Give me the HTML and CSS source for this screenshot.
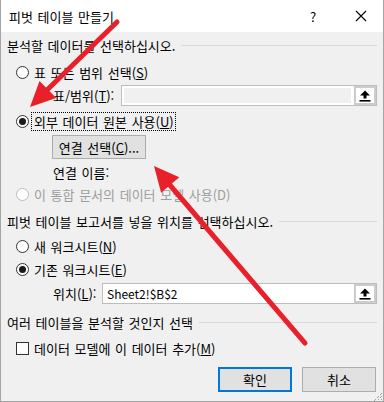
FILE: index.html
```html
<!DOCTYPE html>
<html lang="ko">
<head>
    <meta charset="UTF-8">
    <meta name="viewport" content="width=device-width, initial-scale=1.0">
    <title>피벗 테이블 만들기</title>
    <link rel="stylesheet" href="styles.css">
</head>
<body>
    <div class="dialog">
        <div class="titlebar">
            <span class="title">피벗 테이블 만들기</span>
            <span class="help">?</span>
            <svg class="close" width="12" height="12" viewBox="0 0 12 12">
                <path d="M1 1 L11 11 M11 1 L1 11" stroke="#000" stroke-width="1.1" fill="none"/>
            </svg>
        </div>
        <div class="content">
            <div class="group-title row-h1"><span>분석할 데이터를 선택하십시오.</span></div>
            <div class="radio row-src1"><span class="circle"></span><span>표 또는 범위 선택(<u>S</u>)</span></div>
            <div class="field-row row-range">
                <span class="field-label label-range">표/범위(<u>T</u>):</span>
                <div class="refedit disabled">
                    <div class="refedit-input"></div>
                    <div class="refedit-btn">
                        <svg width="12" height="12" viewBox="0 0 12 12">
                            <path d="M6 0.5 L11 5.5 L7.5 5.5 L7.5 8.5 L4.5 8.5 L4.5 5.5 L1 5.5 Z" fill="#000"/>
                            <rect x="0.5" y="10" width="11" height="1.6" fill="#000"/>
                        </svg>
                    </div>
                </div>
            </div>
            <div class="radio row-src2"><span class="circle checked"></span><span class="focus">외부 데이터 원본 사용(<u>U</u>)</span></div>
            <div class="row-conn"><button class="btn btn-conn">연결 선택(<u>C</u>)...</button></div>
            <div class="conn-name row-name">연결 이름:</div>
            <div class="radio disabled-radio row-model"><span class="circle"></span><span>이 통합 문서의 데이터 모델 사용(D)</span></div>

            <div class="group-title row-h2"><span>피벗 테이블 보고서를 넣을 위치를 선택하십시오.</span></div>
            <div class="radio row-new"><span class="circle"></span><span>새 워크시트(<u>N</u>)</span></div>
            <div class="radio row-exist"><span class="circle checked"></span><span>기존 워크시트(<u>E</u>)</span></div>
            <div class="field-row row-loc">
                <span class="field-label label-loc">위치(<u>L</u>):</span>
                <div class="refedit">
                    <div class="refedit-input">Sheet2!$B$2</div>
                    <div class="refedit-btn">
                        <svg width="12" height="12" viewBox="0 0 12 12">
                            <path d="M6 0.5 L11 5.5 L7.5 5.5 L7.5 8.5 L4.5 8.5 L4.5 5.5 L1 5.5 Z" fill="#000"/>
                            <rect x="0.5" y="10" width="11" height="1.6" fill="#000"/>
                        </svg>
                    </div>
                </div>
            </div>

            <div class="group-title row-h3"><span>여러 테이블을 분석할 것인지 선택</span></div>
            <div class="check row-check"><span class="box"></span><span>데이터 모델에 이 데이터 추가(<u>M</u>)</span></div>

            <div class="actions">
                <button class="btn btn-ok">확인</button>
                <button class="btn btn-cancel">취소</button>
            </div>
        </div>
        <svg class="grip" width="10" height="10" viewBox="0 0 10 10">
            <g fill="#a0a0a0">
                <rect x="8" y="2" width="1" height="1"/><rect x="7" y="3" width="1" height="1"/>
                <rect x="8" y="5" width="1" height="1"/><rect x="7" y="6" width="1" height="1"/>
                <rect x="5" y="5" width="1" height="1"/><rect x="4" y="6" width="1" height="1"/>
                <rect x="8" y="8" width="1" height="1"/><rect x="5" y="8" width="1" height="1"/>
                <rect x="2" y="8" width="1" height="1"/><rect x="1" y="9" width="1" height="1"/>
            </g>
        </svg>
    </div>
    <!-- 설명용 빨간 화살표 -->
    <svg class="annotations" width="384" height="402" viewBox="0 0 384 402">
        <g stroke="#e8202a" stroke-width="5" stroke-linecap="round" fill="#e8202a">
            <line x1="117" y1="22" x2="46" y2="91"/>
            <line x1="305" y1="343" x2="169" y2="184"/>
        </g>
        <g fill="#e8202a">
            <polygon points="30,107 39.5,80.9 56.3,98.1"/>
            <polygon points="154,166 179.3,177.2 161.1,192.8"/>
        </g>
    </svg>
</body>
</html>
```

FILE: styles.css
```css
body {
    margin: 0;
    padding: 0;
    font-family: "Noto Sans CJK KR", "Noto Sans", sans-serif;
    font-size: 13px;
    word-spacing: 1px;
    color: #000;
    background: #f0f0f0;
}
.dialog {
    width: 384px;
    height: 402px;
    box-sizing: border-box;
    border: 1px solid #a6a6a6;
    border-top: none;
    background: #f0f0f0;
    position: relative;
    overflow: hidden;
}
.titlebar {
    height: 32px;
    background: #fff;
    display: flex;
    align-items: center;
    padding-left: 8px;
}
.title {
    flex: 1;
}
.help {
    width: 20px;
    text-align: center;
    margin-right: 32px;
}
.close {
    margin-right: 16px;
}
.content {
    padding: 5px 6px 0 6px;
    display: flex;
    flex-direction: column;
}
.group-title {
    height: 16px;
    display: flex;
    align-items: center;
    white-space: nowrap;
}
.group-title::after {
    content: "";
    flex: 1;
    height: 1px;
    background: #dadada;
    margin-left: 6px;
}
.radio, .check {
    height: 16px;
    display: flex;
    align-items: center;
    padding-left: 9px;
    white-space: nowrap;
}
.circle {
    width: 13px;
    height: 13px;
    box-sizing: border-box;
    border: 1px solid #333;
    border-radius: 50%;
    background: #fff;
    margin-right: 5px;
    position: relative;
    flex: none;
}
.circle.checked::after {
    content: "";
    position: absolute;
    left: 2px;
    top: 2px;
    width: 7px;
    height: 7px;
    border-radius: 50%;
    background: #1a1a1a;
}
.disabled-radio {
    color: #9d9d9d;
}
.disabled-radio .circle {
    border-color: #bcbcbc;
}
.box {
    width: 13px;
    height: 13px;
    box-sizing: border-box;
    border: 1px solid #333;
    background: #fff;
    margin-right: 5px;
    flex: none;
}
.focus {
    border: 1px dotted #000;
    padding: 0 1px 0 2px;
    margin-left: -3px;
    line-height: 17px;
}
.field-row {
    height: 21px;
    display: flex;
    align-items: center;
    padding-left: 46px;
}
.field-label {
    flex: none;
}
.label-range { width: 68px; }
.label-loc { width: 49px; }
.refedit {
    flex: 1;
    height: 21px;
    box-sizing: border-box;
    display: flex;
    border: 1px solid #bdbdbd;
    background: #fff;
}
.refedit-input {
    flex: 1;
    padding-left: 4px;
    font-size: 12px;
    word-spacing: 0;
    line-height: 19px;
    white-space: nowrap;
}
.refedit.disabled .refedit-input {
    background: #f0f0f0;
    border: 2px solid #fff;
    border-right-width: 3px;
}
.refedit-btn {
    width: 22px;
    flex: none;
    box-sizing: border-box;
    border: 2px solid #cccccc;
    background: #fff;
    display: flex;
    align-items: center;
    justify-content: center;
}
.btn {
    font-family: inherit;
    font-size: 13px;
    word-spacing: 1px;
    color: #000;
    background: #e1e1e1;
    border: 1px solid #adadad;
    padding: 0;
    margin: 0;
    box-sizing: border-box;
}
.btn-conn {
    width: 94px;
    height: 24px;
    margin-left: 45px;
}
.conn-name {
    height: 16px;
    line-height: 16px;
    padding-left: 46px;
}
.row-h1 { margin-top: 0; }
.row-src1 { margin-top: 11px; }
.row-range { margin-top: 5px; }
.row-src2 { margin-top: 6px; height: 19px; }
.row-conn { margin-top: 4px; height: 24px; display: flex; }
.row-name { margin-top: 6px; }
.row-model { margin-top: 5px; }
.row-h2 { margin-top: 11px; }
.row-new { margin-top: 9px; }
.row-exist { margin-top: 7px; }
.row-loc { margin-top: 6px; }
.row-h3 { margin-top: 10px; }
.row-check { margin-top: 10px; }
.actions {
    margin-top: 11px;
    display: flex;
    justify-content: flex-end;
    gap: 10px;
    padding-right: 1px;
}
.btn-ok, .btn-cancel {
    width: 74px;
    height: 25px;
}
.btn-ok {
    border: 2px solid #0078d7;
}
.grip {
    position: absolute;
    right: 0;
    bottom: 0;
}
.annotations {
    position: absolute;
    left: 0;
    top: 0;
    pointer-events: none;
}
```
